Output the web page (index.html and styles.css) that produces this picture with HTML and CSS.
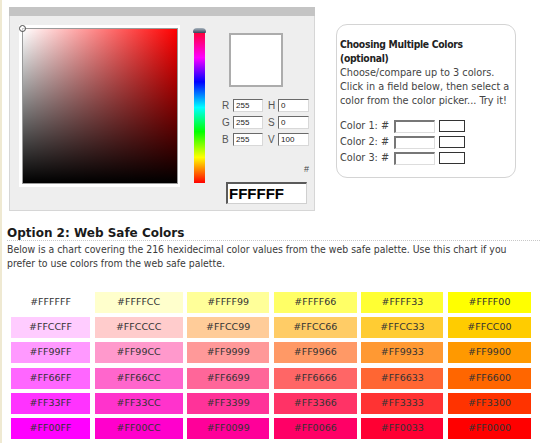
FILE: index.html
```html
<!DOCTYPE html>
<html>
<head>
<meta charset="utf-8">
<link rel="stylesheet" href="styles.css">
</head>
<body>
<div class="page">
  <div class="top">
    <div class="picker">
      <div class="picker-bar"></div>
      <div class="picker-body">
        <div class="sv-frame">
          <div class="sv"><span class="sv-marker"></span></div>
        </div>
        <div class="hue"><span class="hue-handle"></span></div>
        <div class="values">
          <div class="preview"></div>
          <div class="fields">
            <span class="lbl">R</span><span class="num">255</span>
            <span class="lbl lbl2">H</span><span class="num">0</span>
            <span class="lbl">G</span><span class="num">255</span>
            <span class="lbl lbl2">S</span><span class="num">0</span>
            <span class="lbl">B</span><span class="num">255</span>
            <span class="lbl lbl2">V</span><span class="num">100</span>
          </div>
          <div class="hash">#</div>
          <div class="hex">FFFFFF</div>
        </div>
      </div>
    </div>
    <div class="multi">
      <p class="multi-title">Choosing Multiple Colors<br>(optional)</p>
      <p class="multi-text">Choose/compare up to 3 colors. Click in a field below, then select a color from the color picker... Try it!</p>
      <div class="crow"><span class="clbl">Color 1: #</span><span class="cin"></span><span class="cbox"></span></div>
      <div class="crow"><span class="clbl">Color 2: #</span><span class="cin"></span><span class="cbox"></span></div>
      <div class="crow"><span class="clbl">Color 3: #</span><span class="cin"></span><span class="cbox"></span></div>
    </div>
  </div>
  <h2 class="section-title">Option 2: Web Safe Colors</h2>
  <p class="intro">Below is a chart covering the 216 hexidecimal color values from the web safe palette. Use this chart if you prefer to use colors from the web safe palette.</p>
  <div class="chart">
    <div class="cell c-ffffff">#FFFFFF</div>
    <div class="cell c-ffffcc">#FFFFCC</div>
    <div class="cell c-ffff99">#FFFF99</div>
    <div class="cell c-ffff66">#FFFF66</div>
    <div class="cell c-ffff33">#FFFF33</div>
    <div class="cell c-ffff00">#FFFF00</div>
    <div class="cell c-ffccff">#FFCCFF</div>
    <div class="cell c-ffcccc">#FFCCCC</div>
    <div class="cell c-ffcc99">#FFCC99</div>
    <div class="cell c-ffcc66">#FFCC66</div>
    <div class="cell c-ffcc33">#FFCC33</div>
    <div class="cell c-ffcc00">#FFCC00</div>
    <div class="cell c-ff99ff">#FF99FF</div>
    <div class="cell c-ff99cc">#FF99CC</div>
    <div class="cell c-ff9999">#FF9999</div>
    <div class="cell c-ff9966">#FF9966</div>
    <div class="cell c-ff9933">#FF9933</div>
    <div class="cell c-ff9900">#FF9900</div>
    <div class="cell c-ff66ff">#FF66FF</div>
    <div class="cell c-ff66cc">#FF66CC</div>
    <div class="cell c-ff6699">#FF6699</div>
    <div class="cell c-ff6666">#FF6666</div>
    <div class="cell c-ff6633">#FF6633</div>
    <div class="cell c-ff6600">#FF6600</div>
    <div class="cell c-ff33ff">#FF33FF</div>
    <div class="cell c-ff33cc">#FF33CC</div>
    <div class="cell c-ff3399">#FF3399</div>
    <div class="cell c-ff3366">#FF3366</div>
    <div class="cell c-ff3333">#FF3333</div>
    <div class="cell c-ff3300">#FF3300</div>
    <div class="cell c-ff00ff">#FF00FF</div>
    <div class="cell c-ff00cc">#FF00CC</div>
    <div class="cell c-ff0099">#FF0099</div>
    <div class="cell c-ff0066">#FF0066</div>
    <div class="cell c-ff0033">#FF0033</div>
    <div class="cell c-ff0000">#FF0000</div>
  </div>
</div>
</body>
</html>
```
FILE: styles.css
```css
html, body {
  margin: 0;
  padding: 0;
  background: #ffffff;
  overflow: hidden;
}
.page {
  border-left: 2px solid #efe9d2;
  padding-left: 5px;
  height: 443px;
  box-sizing: border-box;
  font-family: "DejaVu Sans", Verdana, sans-serif;
  color: #333;
}
.top {
  display: flex;
  align-items: flex-start;
  padding-top: 7px;
}
/* ---------- picker ---------- */
.picker {
  margin-left: 2px;
  width: 306px;
}
.picker-bar {
  height: 9px;
  background: #c4c4c4;
}
.picker-body {
  height: 195px;
  box-sizing: border-box;
  background: #eeeeee;
  border: 1px solid #d6d6d6;
  border-top: none;
  display: flex;
  align-items: flex-start;
  padding: 9px 0 0 9px;
}
.sv-frame {
  background: #ffffff;
  padding: 3px 2px 3px 3px;
}
.sv {
  position: relative;
  width: 154px;
  height: 154px;
  border: 1px solid #9a9a9a;
  background:
    linear-gradient(to top, #000000, rgba(0,0,0,0)),
    linear-gradient(to right, #ffffff, #ff0000);
}
.sv-marker {
  position: absolute;
  left: -4px;
  top: -4px;
  width: 5px;
  height: 5px;
  border: 1.5px solid #4a4a4a;
  border-radius: 50%;
  background: rgba(255,255,255,0.5);
}
.hue {
  position: relative;
  margin-left: 14px;
  margin-top: 7px;
  width: 11px;
  height: 151px;
  background: linear-gradient(to bottom, #ff0033, #ff00ff 17%, #0000ff 33%, #00ffff 50%, #00ff00 66%, #ffff00 83%, #ff0000);
}
.hue-handle {
  position: absolute;
  left: -1px;
  top: -4px;
  width: 13px;
  height: 5px;
  border-radius: 4px 4px 1px 1px;
  background: linear-gradient(#a9b4be, #33455a);
}
.values {
  margin-left: 17px;
  width: 88px;
  display: flex;
  flex-direction: column;
  font-family: "Liberation Sans", Arial, sans-serif;
}
.preview {
  margin-left: 7px;
  margin-top: 8px;
  width: 50px;
  height: 50px;
  background: #ffffff;
  border: 2px solid #acacac;
}
.fields {
  margin-top: 12px;
  display: grid;
  grid-template-columns: 11px 30px 15px 31px;
  grid-auto-rows: 13px;
  row-gap: 4px;
}
.lbl {
  font-size: 10px;
  line-height: 13px;
  color: #555;
}
.lbl2 {
  padding-left: 5px;
}
.num {
  box-sizing: border-box;
  background: #fff;
  border-top: 1px solid #6a6a6a;
  border-left: 1px solid #6a6a6a;
  border-right: 1px solid #d8d8d8;
  border-bottom: 1px solid #d8d8d8;
  font-size: 8px;
  line-height: 11px;
  padding-left: 2px;
  color: #222;
}
.hash {
  margin-top: 18px;
  height: 18px;
  text-align: right;
  font-size: 9px;
  line-height: 10px;
  color: #444;
  padding-right: 1px;
}
.hex {
  margin-left: 4px;
  width: 81px;
  height: 22px;
  box-sizing: border-box;
  background: #fff;
  border-top: 2px solid #5a5a5a;
  border-left: 2px solid #5a5a5a;
  border-right: 1px solid #d0d0d0;
  border-bottom: 1px solid #d0d0d0;
  font-size: 15px;
  font-weight: bold;
  line-height: 19px;
  padding-left: 1px;
  color: #000;
}
/* ---------- multi colour box ---------- */
.multi {
  margin-left: 21px;
  margin-top: 17px;
  width: 180px;
  height: 154px;
  box-sizing: border-box;
  border: 1px solid #d4d4d4;
  border-radius: 11px;
  padding: 12px 0 0 3px;
  font-family: "DejaVu Sans Condensed", "DejaVu Sans", sans-serif;
  font-stretch: condensed;
  font-size: 10.8px;
  line-height: 14.3px;
  color: #444;
}
.multi p {
  margin: 0;
}
.multi-title {
  font-weight: bold;
  font-size: 10.3px;
  letter-spacing: -0.3px;
  color: #222;
}
.multi-text {
  margin-bottom: 10px !important;
}
.crow {
  display: flex;
  align-items: center;
  height: 16px;
}
.clbl {
  width: 54px;
}
.cin {
  width: 41px;
  height: 13px;
  box-sizing: border-box;
  background: #fff;
  border-top: 2px solid #777;
  border-left: 2px solid #777;
  border-right: 1px solid #ddd;
  border-bottom: 1px solid #ddd;
}
.cbox {
  margin-left: 4px;
  width: 26px;
  height: 12px;
  box-sizing: border-box;
  border: 1px solid #333;
  background: #fff;
}
/* ---------- section ---------- */
.section-title {
  margin: 15px 0 0 0;
  font-size: 12px;
  line-height: 14px;
  font-weight: bold;
  color: #1a1a1a;
  border-bottom: 1px dotted #c8c8c8;
}
.intro {
  margin: 2px 0 0 0;
  padding-right: 12px;
  font-family: "DejaVu Sans Condensed", "DejaVu Sans", sans-serif;
  font-stretch: condensed;
  font-size: 10.4px;
  line-height: 13.5px;
  color: #3a3a3a;
}
.chart {
  margin: 22px 0 0 4px;
  display: grid;
  grid-template-columns: 79px 88px 82px 83px 82px 83px;
  column-gap: 4.6px;
  grid-auto-rows: 21px;
  row-gap: 4.2px;
}
.cell {
  font-size: 9.5px;
  line-height: 19px;
  text-align: center;
  color: #333;
}
.c-ffffff { background: #ffffff; }
.c-ffffcc { background: #ffffcc; }
.c-ffff99 { background: #ffff99; }
.c-ffff66 { background: #ffff66; }
.c-ffff33 { background: #ffff33; }
.c-ffff00 { background: #ffff00; }
.c-ffccff { background: #ffccff; }
.c-ffcccc { background: #ffcccc; }
.c-ffcc99 { background: #ffcc99; }
.c-ffcc66 { background: #ffcc66; }
.c-ffcc33 { background: #ffcc33; }
.c-ffcc00 { background: #ffcc00; }
.c-ff99ff { background: #ff99ff; }
.c-ff99cc { background: #ff99cc; }
.c-ff9999 { background: #ff9999; }
.c-ff9966 { background: #ff9966; }
.c-ff9933 { background: #ff9933; }
.c-ff9900 { background: #ff9900; }
.c-ff66ff { background: #ff66ff; }
.c-ff66cc { background: #ff66cc; }
.c-ff6699 { background: #ff6699; }
.c-ff6666 { background: #ff6666; }
.c-ff6633 { background: #ff6633; }
.c-ff6600 { background: #ff6600; }
.c-ff33ff { background: #ff33ff; }
.c-ff33cc { background: #ff33cc; }
.c-ff3399 { background: #ff3399; }
.c-ff3366 { background: #ff3366; }
.c-ff3333 { background: #ff3333; }
.c-ff3300 { background: #ff3300; }
.c-ff00ff { background: #ff00ff; }
.c-ff00cc { background: #ff00cc; }
.c-ff0099 { background: #ff0099; }
.c-ff0066 { background: #ff0066; }
.c-ff0033 { background: #ff0033; }
.c-ff0000 { background: #ff0000; }
```
